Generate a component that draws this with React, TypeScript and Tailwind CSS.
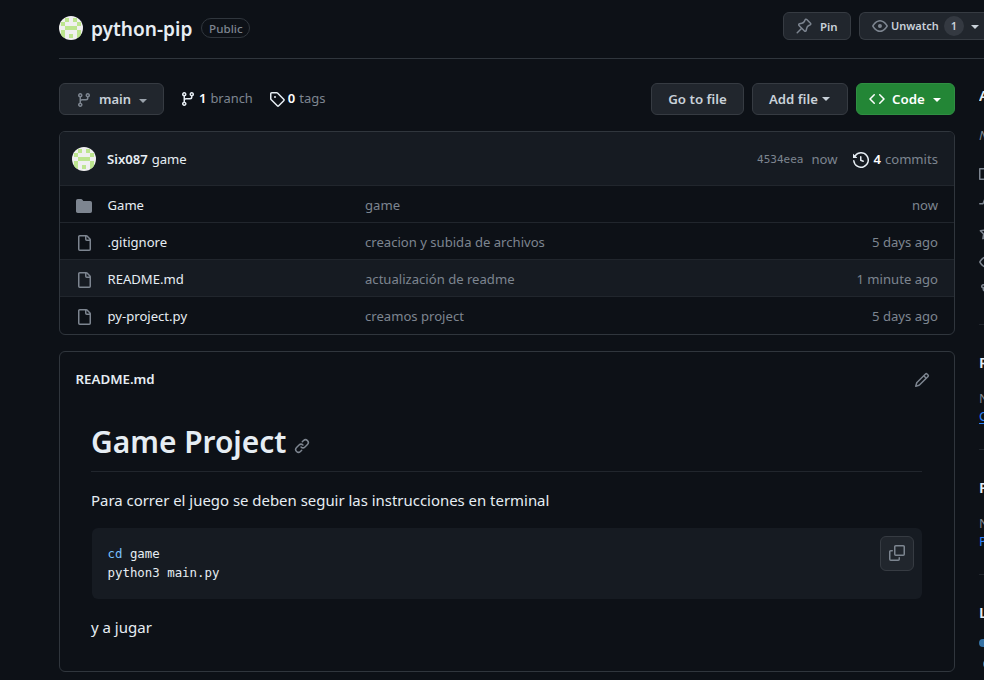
import React from "react";

const ICONS = {
  branch:
    "M9.5 3.25a2.25 2.25 0 1 1 3 2.122V6A2.5 2.5 0 0 1 10 8.5H6a1 1 0 0 0-1 1v1.128a2.251 2.251 0 1 1-1.5 0V5.372a2.25 2.25 0 1 1 1.5 0v1.836A2.493 2.493 0 0 1 6 7h4a1 1 0 0 0 1-1v-.628A2.25 2.25 0 0 1 9.5 3.25Zm-6 0a.75.75 0 1 0 1.5 0 .75.75 0 0 0-1.5 0Zm8.25-.75a.75.75 0 1 0 0 1.5.75.75 0 0 0 0-1.5ZM4.25 12a.75.75 0 1 0 0 1.5.75.75 0 0 0 0-1.5Z",
  tag: "M1 7.775V2.75C1 1.784 1.784 1 2.75 1h5.025c.464 0 .91.184 1.238.513l6.25 6.25a1.75 1.75 0 0 1 0 2.474l-5.026 5.026a1.75 1.75 0 0 1-2.474 0l-6.25-6.25A1.752 1.752 0 0 1 1 7.775Zm1.5 0c0 .066.026.13.073.177l6.25 6.25a.25.25 0 0 0 .354 0l5.025-5.025a.25.25 0 0 0 0-.354l-6.25-6.25a.25.25 0 0 0-.177-.073H2.75a.25.25 0 0 0-.25.25ZM6 5a1 1 0 1 1 0 2 1 1 0 0 1 0-2Z",
  eye: "M8 2c1.981 0 3.671.992 4.933 2.078 1.27 1.091 2.187 2.345 2.637 3.023a1.62 1.62 0 0 1 0 1.798c-.45.678-1.367 1.932-2.637 3.023C11.67 13.008 9.981 14 8 14c-1.981 0-3.671-.992-4.933-2.078C1.797 10.83.88 9.576.43 8.898a1.62 1.62 0 0 1 0-1.798c.45-.677 1.367-1.931 2.637-3.022C4.33 2.992 6.019 2 8 2ZM1.679 7.932a.12.12 0 0 0 0 .136c.411.622 1.241 1.75 2.366 2.717C5.176 11.758 6.527 12.5 8 12.5c1.473 0 2.825-.742 3.955-1.715 1.124-.967 1.954-2.096 2.366-2.717a.12.12 0 0 0 0-.136c-.412-.621-1.242-1.75-2.366-2.717C10.824 4.242 9.473 3.5 8 3.5c-1.473 0-2.825.742-3.955 1.715-1.124.967-1.954 2.096-2.366 2.717ZM8 10a2 2 0 1 1-.001-3.999A2 2 0 0 1 8 10Z",
  code: "m11.28 3.22 4.25 4.25a.75.75 0 0 1 0 1.06l-4.25 4.25a.749.749 0 0 1-1.275-.326.749.749 0 0 1 .215-.734L13.94 8l-3.72-3.72a.749.749 0 0 1 .326-1.275.749.749 0 0 1 .734.215Zm-6.56 0a.751.751 0 0 1 1.042.018.751.751 0 0 1 .018 1.042L2.06 8l3.72 3.72a.749.749 0 0 1-.326 1.275.749.749 0 0 1-.734-.215L.47 8.53a.75.75 0 0 1 0-1.06Z",
  history:
    "m.427 1.927 1.215 1.215a8.002 8.002 0 1 1-1.6 5.685.75.75 0 1 1 1.493-.154 6.5 6.5 0 1 0 1.18-4.458l1.358 1.358A.25.25 0 0 1 3.896 6H.25A.25.25 0 0 1 0 5.75V2.104a.25.25 0 0 1 .427-.177ZM7.75 4a.75.75 0 0 1 .75.75v2.992l2.028.812a.75.75 0 0 1-.557 1.392l-2.5-1A.751.751 0 0 1 7 8.25v-3.5A.75.75 0 0 1 7.75 4Z",
  folder:
    "M1.75 1A1.75 1.75 0 0 0 0 2.75v10.5C0 14.216.784 15 1.75 15h12.5A1.75 1.75 0 0 0 16 13.25v-8.5A1.75 1.75 0 0 0 14.25 3H7.5a.25.25 0 0 1-.2-.1l-.9-1.2C6.07 1.26 5.55 1 5 1H1.75Z",
  file: "M2 1.75C2 .784 2.784 0 3.75 0h6.586c.464 0 .909.184 1.237.513l2.914 2.914c.329.328.513.773.513 1.237v9.586A1.75 1.75 0 0 1 13.25 16h-9.5A1.75 1.75 0 0 1 2 14.25Zm1.75-.25a.25.25 0 0 0-.25.25v12.5c0 .138.112.25.25.25h9.5a.25.25 0 0 0 .25-.25V6h-2.75A1.75 1.75 0 0 1 9 4.25V1.5Zm6.75.062V4.25c0 .138.112.25.25.25h2.688l-.011-.013-2.914-2.914-.013-.011Z",
  pencil:
    "M11.013 1.427a1.75 1.75 0 0 1 2.474 0l1.086 1.086a1.75 1.75 0 0 1 0 2.474l-8.61 8.61c-.21.21-.47.364-.756.445l-3.251.93a.75.75 0 0 1-.927-.928l.929-3.25c.081-.286.235-.547.445-.758l8.61-8.61Zm.176 4.823L9.75 4.81l-6.286 6.287a.253.253 0 0 0-.064.108l-.558 1.953 1.953-.558a.253.253 0 0 0 .108-.064Zm1.238-3.763a.25.25 0 0 0-.354 0L10.811 3.75l1.439 1.44 1.263-1.263a.25.25 0 0 0 0-.354Z",
  link: "m7.775 3.275 1.25-1.25a3.5 3.5 0 1 1 4.95 4.95l-2.5 2.5a3.5 3.5 0 0 1-4.95 0 .751.751 0 0 1 .018-1.042.751.751 0 0 1 1.042-.018 1.998 1.998 0 0 0 2.83 0l2.5-2.5a2.002 2.002 0 0 0-2.83-2.83l-1.25 1.25a.751.751 0 0 1-1.042-.018.751.751 0 0 1-.018-1.042Zm-4.69 9.64a1.998 1.998 0 0 0 2.83 0l1.25-1.25a.751.751 0 0 1 1.042.018.751.751 0 0 1 .018 1.042l-1.25 1.25a3.5 3.5 0 1 1-4.95-4.95l2.5-2.5a3.5 3.5 0 0 1 4.95 0 .751.751 0 0 1-.018 1.042.751.751 0 0 1-1.042.018 1.998 1.998 0 0 0-2.83 0l-2.5 2.5a1.998 1.998 0 0 0 0 2.83Z",
  copy: "M0 6.75C0 5.784.784 5 1.75 5h1.5a.75.75 0 0 1 0 1.5h-1.5a.25.25 0 0 0-.25.25v7.5c0 .138.112.25.25.25h7.5a.25.25 0 0 0 .25-.25v-1.5a.75.75 0 0 1 1.5 0v1.5A1.75 1.75 0 0 1 9.25 16h-7.5A1.75 1.75 0 0 1 0 14.25ZM5 1.75C5 .784 5.784 0 6.75 0h7.5C15.216 0 16 .784 16 1.75v7.5A1.75 1.75 0 0 1 14.25 11h-7.5A1.75 1.75 0 0 1 5 9.25Zm1.75-.25a.25.25 0 0 0-.25.25v7.5c0 .138.112.25.25.25h7.5a.25.25 0 0 0 .25-.25v-7.5a.25.25 0 0 0-.25-.25Z",
  pin: "m11.294.984 3.722 3.722a1.75 1.75 0 0 1-.504 2.826l-1.327.613a3.089 3.089 0 0 0-1.707 2.084l-.584 2.454c-.317 1.332-1.972 1.8-2.94.832L5.75 11.311 1.78 15.28a.749.749 0 1 1-1.06-1.06l3.969-3.97-2.204-2.204c-.968-.968-.5-2.623.832-2.94l2.454-.584a3.08 3.08 0 0 0 2.084-1.707l.613-1.327a1.75 1.75 0 0 1 2.826-.504ZM6.283 9.723l2.732 2.731a.25.25 0 0 0 .42-.119l.584-2.454a4.586 4.586 0 0 1 2.537-3.098l1.328-.613a.25.25 0 0 0 .072-.404l-3.722-3.722a.25.25 0 0 0-.404.072l-.613 1.328a4.584 4.584 0 0 1-3.098 2.537l-2.454.584a.25.25 0 0 0-.119.42l2.731 2.732Z",
  book: "M0 1.75A.75.75 0 0 1 .75 1h4.253c1.227 0 2.317.59 3 1.501A3.743 3.743 0 0 1 11.006 1h4.245a.75.75 0 0 1 .75.75v10.5a.75.75 0 0 1-.75.75h-4.507a2.25 2.25 0 0 0-1.591.659l-.622.621a.75.75 0 0 1-1.06 0l-.622-.621A2.25 2.25 0 0 0 5.258 13H.75a.75.75 0 0 1-.75-.75Zm7.251 10.324.004-5.073-.002-2.253A2.25 2.25 0 0 0 5.003 2.5H1.5v9h3.757a3.75 3.75 0 0 1 1.994.574ZM8.755 4.75l-.004 7.322a3.752 3.752 0 0 1 1.992-.572H14.5v-9h-3.495a2.25 2.25 0 0 0-2.25 2.25Z",
  pulse:
    "M6 2c.306 0 .582.187.696.471L10 10.731l1.304-3.26A.751.751 0 0 1 12 7h3.25a.75.75 0 0 1 0 1.5h-2.742l-1.812 4.528a.751.751 0 0 1-1.392 0L6 4.77 4.696 8.03A.75.75 0 0 1 4 8.5H.75a.75.75 0 0 1 0-1.5h2.742l1.812-4.529A.751.751 0 0 1 6 2Z",
  star: "M8 .25a.75.75 0 0 1 .673.418l1.882 3.815 4.21.612a.75.75 0 0 1 .416 1.279l-3.046 2.97.719 4.192a.751.751 0 0 1-1.088.791L8 12.347l-3.766 1.98a.75.75 0 0 1-1.088-.79l.72-4.194L.818 6.374a.75.75 0 0 1 .416-1.28l4.21-.611L7.327.668A.75.75 0 0 1 8 .25Zm0 2.445L6.615 5.5a.75.75 0 0 1-.564.41l-3.097.45 2.24 2.184a.75.75 0 0 1 .216.664l-.528 3.084 2.769-1.456a.75.75 0 0 1 .698 0l2.77 1.456-.53-3.084a.75.75 0 0 1 .216-.664l2.24-2.183-3.096-.45a.75.75 0 0 1-.564-.41L8 2.694Z",
  fork: "M5 5.372v.878c0 .414.336.75.75.75h4.5a.75.75 0 0 0 .75-.75v-.878a2.25 2.25 0 1 1 1.5 0v.878a2.25 2.25 0 0 1-2.25 2.25h-1.5v2.128a2.251 2.251 0 1 1-1.5 0V8.5h-1.5A2.25 2.25 0 0 1 3.5 6.25v-.878a2.25 2.25 0 1 1 1.5 0ZM5 3.25a.75.75 0 1 0-1.5 0 .75.75 0 0 0 1.5 0Zm6.75.75a.75.75 0 1 0 0-1.5.75.75 0 0 0 0 1.5Zm-3 8.75a.75.75 0 1 0-1.5 0 .75.75 0 0 0 1.5 0Z",
};

function Icon({ name, className = "" }: { name: keyof typeof ICONS; className?: string }) {
  return (
    <svg viewBox="0 0 16 16" fill="currentColor" className={`size-4 shrink-0 ${className}`}>
      <path d={ICONS[name]} />
    </svg>
  );
}

function Caret({ className = "" }: { className?: string }) {
  return <span className={`h-0 w-0 shrink-0 border-x-4 border-t-4 border-x-transparent border-t-current ${className}`} />;
}

/* Five-by-five identicon on a light disc. */
function Avatar() {
  const cells = [".#.#.", "#...#", ".###.", "#...#", "#.#.#"];
  return (
    <svg viewBox="0 0 24 24" className="size-6 shrink-0 rounded-full bg-[#f0f0f0]" shapeRendering="crispEdges">
      {cells.flatMap((row, y) =>
        [...row].map((c, x) =>
          c === "#" ? <rect key={`${x}-${y}`} x={2 + x * 4} y={2 + y * 4} width="4" height="4" fill="#bde58f" /> : null,
        ),
      )}
    </svg>
  );
}

const FILES = [
  { name: "Game", icon: "folder" as const, message: "game", age: "now" },
  { name: ".gitignore", icon: "file" as const, message: "creacion y subida de archivos", age: "5 days ago" },
  { name: "README.md", icon: "file" as const, message: "actualización de readme", age: "1 minute ago", active: true },
  { name: "py-project.py", icon: "file" as const, message: "creamos project", age: "5 days ago" },
];

const BUTTON = "flex items-center rounded-md border border-[#363b42] bg-[#21262d] font-semibold text-[#c9d1d9]";

function Header() {
  return (
    <header className="ml-[59px] flex h-[59px] items-start border-b border-[#30363d]">
      <div className="mt-[15px] flex items-center">
        <Avatar />
        <h1 className="mt-0.5 ml-2 text-[19.1px] leading-6 font-semibold text-[#e6edf3]">python-pip</h1>
        <span className="ml-[9px] flex h-5 w-[49px] items-center justify-center rounded-full border border-[#30363d] pt-px text-[11.6px] font-medium text-[#7d8590]">
          Public
        </span>
      </div>
      <div className="mt-3 ml-auto flex gap-2">
        <button className={`${BUTTON} h-7 w-[68px] pl-3 text-[11.5px]`}>
          <Icon name="pin" className="mr-2 text-[#7d8590]" />
          <span className="pt-px">Pin</span>
        </button>
        <button className={`${BUTTON} h-7 w-[125px] rounded-r-none border-r-0 pl-3 text-[11px]`}>
          <Icon name="eye" className="mr-[3px] text-[#7d8590]" />
          <span className="pt-px">Unwatch</span>
          <span className="ml-[5px] flex h-5 w-5 items-center justify-center rounded-full bg-[#343941]">1</span>
          <Caret className="mt-0.5 ml-[7px]" />
        </button>
      </div>
    </header>
  );
}

function Toolbar() {
  return (
    <div className="flex h-8 text-[13px]">
      <button className={`${BUTTON} w-[105px] pl-4`}>
        <Icon name="branch" className="mt-px mr-[7px] text-[#7d8590]" />
        <span className="pt-px">main</span>
        <Caret className="mt-[3px] ml-2 text-[#9aa2ab]" />
      </button>
      <div className="ml-4 flex items-center text-[#7d8590]">
        <Icon name="branch" className="mr-[3px] text-[#e6edf3]" />
        <b className="mr-1 font-semibold text-white">1</b>
        <span className="text-[12.9px]">branch</span>
      </div>
      <div className="ml-4 flex items-center text-[#7d8590]">
        <Icon name="tag" className="mr-[3px] text-[#e6edf3]" />
        <b className="mr-1 font-semibold text-white">0</b>tags
      </div>
      <div className="ml-auto flex gap-2">
        <button className={`${BUTTON} w-[93px] justify-center pt-px text-[13.3px]`}>Go to file</button>
        <button className={`${BUTTON} w-24 pl-4`}>
          <span className="pt-px text-[13.2px]">Add file</span>
          <Caret className="ml-1" />
        </button>
        <button className="flex w-[99px] items-center rounded-md border border-[#2f8f42] bg-[#238636] pl-3 font-semibold text-white">
          <Icon name="code" className="mr-[7px]" />
          <span className="pt-px text-[13.3px]">Code</span>
          <Caret className="mt-0.5 ml-2" />
        </button>
      </div>
    </div>
  );
}

function FileTable() {
  return (
    <section className="mt-4 h-[204px] overflow-hidden rounded-md border border-[#30363d] text-[13.1px]">
      <div className="flex h-[53px] items-center bg-[#161b22] pt-0.5 pr-4 pl-3">
        <span className="-mt-0.5">
          <Avatar />
        </span>
        <b className="ml-[11px] font-semibold text-[#e6edf3]">Six087</b>
        <span className="ml-1 text-[#e6edf3]">game</span>
        <span className="mt-0.5 ml-auto font-['DejaVu_Sans_Mono',monospace] text-[11px] text-[#7d8590]">4534eea</span>
        <span className="ml-2 text-[#7d8590]">now</span>
        <Icon name="history" className="ml-4 text-[#e6edf3]" />
        <b className="ml-1 font-semibold text-white">4</b>
        <span className="ml-1 text-[#7d8590]">commits</span>
      </div>
      {FILES.map((f) => (
        <div
          key={f.name}
          className={`flex h-[37px] items-center border-t border-[#21262d] px-4 pt-[3px] ${f.active ? "bg-[#161b22]" : ""}`}
        >
          <Icon name={f.icon} className="text-[#7d8590]" />
          <span className="ml-[15.5px] w-[257.5px] text-[#e6edf3]">{f.name}</span>
          <span className="text-[#7d8590]">{f.message}</span>
          <span className="ml-auto text-[#7d8590]">{f.age}</span>
        </div>
      ))}
    </section>
  );
}

function Readme() {
  return (
    <section className="mt-4 h-[321px] rounded-md border border-[#30363d] text-[#e6edf3]">
      <div className="flex h-[55px] items-center justify-between pr-6 pl-[15.5px] text-[13.3px] font-semibold">
        README.md
        <Icon name="pencil" className="text-[#7d8590]" />
      </div>
      <div className="px-8">
        <h2 className="-ml-px flex h-[65px] items-center border-b border-[#21262d] pt-1.5 text-[29.9px] font-semibold">
          Game Project
          <Icon name="link" className="mt-[7px] ml-2 text-[#7d8590]" />
        </h2>
        <p className="mt-4 -ml-px text-[14.93px] leading-6">
          Para correr el juego se deben seguir las instrucciones en terminal
        </p>
        <div className="mt-4 flex h-[71px] items-start justify-between rounded-md bg-[#161b22] p-2 pl-[15.5px]">
          <pre className="mt-2 font-['DejaVu_Sans_Mono',monospace] text-[12.4px] leading-[19.4px]">
            <span className="text-[#79c0ff]">cd</span> game{"\n"}python3 main.py
          </pre>
          <button className="flex h-[35px] w-[34px] items-center justify-center rounded-md border border-[#363b42] bg-[#21262d] pb-px text-[#7d8590]">
            <Icon name="copy" />
          </button>
        </div>
        <p className="mt-4 -ml-px text-[15px] leading-6">y a jugar</p>
      </div>
    </section>
  );
}

function Sidebar() {
  const icons = ["book", "pulse", "star", "eye", "fork"] as const;
  return (
    <aside className="ml-6 w-[5px] shrink-0 overflow-hidden text-[13px] whitespace-nowrap text-[#7d8590]">
      <h3 className="text-[15px] leading-6 font-semibold text-[#e6edf3]">About</h3>
      <p className="mt-4 leading-6 italic">No description</p>
      <div className="mt-5 flex h-[157px] flex-col gap-[13px]">
        {icons.map((n) => (
          <Icon key={n} name={n} />
        ))}
      </div>
      <div className="h-[125px] border-t border-[#21262d]">
        <h3 className="pt-[25px] text-[15px] leading-6 font-semibold text-[#e6edf3]">Releases</h3>
        <p className="mt-[15px] leading-[18px]">No releases published</p>
        <p className="leading-[18px] text-[#2f81f7] underline underline-offset-2">Create a new release</p>
      </div>
      <div className="h-[125px] border-t border-[#21262d]">
        <h3 className="pt-[25px] text-[15px] leading-6 font-semibold text-[#e6edf3]">Packages</h3>
        <p className="mt-[15px] leading-[18px]">No packages published</p>
        <p className="leading-[18px] text-[#2f81f7]">Publish your first package</p>
      </div>
      <div className="border-t border-[#21262d]">
        <h3 className="pt-[25px] text-[15px] leading-6 font-semibold text-[#e6edf3]">Languages</h3>
        <div className="mt-[15px] h-2 w-64 rounded-full bg-[#3572a5]" />
        <div className="mt-[13px] ml-1 size-2 rounded-full bg-[#3572a5]" />
      </div>
    </aside>
  );
}

export default function App() {
  return (
    <div className="h-[680px] w-[984px] overflow-hidden bg-[#0d1117] font-['Noto_Sans',sans-serif]">
      <Header />
      <div className="flex pt-6">
        <main className="ml-[59px] w-[896px] shrink-0">
          <Toolbar />
          <FileTable />
          <Readme />
        </main>
        <Sidebar />
      </div>
    </div>
  );
}
